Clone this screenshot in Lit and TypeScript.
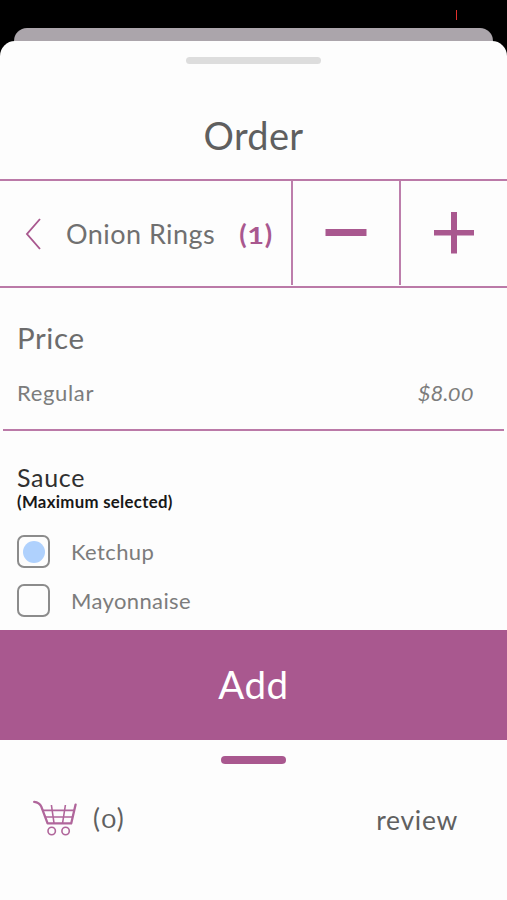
import { LitElement, html, css, svg } from "lit";
import { customElement, property, state } from "lit/decorators.js";

const cartIcon = svg`
  <path d="M1.2 1.8 C5 2.2 7 3.6 8.2 6.4 L14.6 23.4 H38.2 L42.6 4.6" stroke-width="2.3" stroke-linejoin="round" stroke-linecap="round"/>
  <path d="M10 10.4 H41 M12.4 17 H39.6 M18.4 5 L21 23 M32.4 5 L29.6 23" stroke-width="1.6"/>
  <circle cx="18.7" cy="31" r="3.7" stroke-width="1.6"/>
  <circle cx="32.6" cy="31" r="3.7" stroke-width="1.6"/>`;

@customElement("sauce-option")
export class SauceOption extends LitElement {
  @property() label = "";
  @property({ type: Boolean }) checked = false;

  static styles = css`
    :host { display: flex; align-items: center; height: 33px; gap: 21px; }
    .box {
      box-sizing: border-box; width: 33px; height: 33px; border: 2px solid #8c8c8c;
      border-radius: 7px; display: grid; place-items: center;
    }
    .dot { width: 22px; height: 22px; border-radius: 50%; background: #afd1fd; }
    .label { font-size: 22px; line-height: 33px; color: #7c7c7c; letter-spacing: 0.38px; }
  `;

  render() {
    return html`
      <div class="box">${this.checked ? html`<div class="dot"></div>` : null}</div>
      <span class="label">${this.label}</span>`;
  }
}

@customElement("app-root")
export class AppRoot extends LitElement {
  @state() private sauces = [
    { label: "Ketchup", checked: true },
    { label: "Mayonnaise", checked: false },
  ];

  static styles = css`
    :host {
      display: flex; flex-direction: column; width: 507px; height: 900px; overflow: hidden;
      background: #000; font-family: Lato, "Open Sans", sans-serif; color: #5c5c5c;
    }
    .status { height: 28px; display: flex; justify-content: flex-end; align-items: flex-start; }
    .mark { width: 1px; height: 10px; margin: 10px 50px 0 0; background: #e0302c; }
    .behind { height: 30px; margin: 0 14px -17px; border-radius: 13px 13px 0 0; background: #aba5ab; flex: none; }
    .sheet {
      flex: 1; display: flex; flex-direction: column; background: #fdfdfd;
      border-radius: 15px 15px 0 0; z-index: 1;
    }
    .grabber { width: 135px; height: 7px; border-radius: 4px; background: #ddd; margin: 16px auto 0 186px; flex: none; }
    .title {
      margin: 49px 0 0; height: 66px; line-height: 44px; text-align: center; font-weight: 400;
      font-size: 38px; letter-spacing: 0.3px; color: #5f5f5f; flex: none;
    }
    .item {
      display: grid; grid-template-columns: 291px 108px 1fr; height: 105px; flex: none;
      border: solid #bb7aa8; border-width: 2px 0;
    }
    .item > * { display: flex; align-items: center; }
    .cell { justify-content: center; border-left: 2px solid #bd7eac; margin-bottom: 1px; }
    .name { padding-left: 25px; }
    .back { width: 16px; height: 32px; margin-right: 25px; }
    .dish { font-size: 27px; line-height: 40px; letter-spacing: 0.45px; color: #707070; flex: none; }
    .qty { font-size: 27px; font-weight: 700; color: #a9588f; margin-left: 24px; white-space: nowrap; }
    .low { display: inline-block; font-size: 0.77em; transform: scaleX(1.25); margin: 0 0.13em; }
    .qty .low { font-size: 0.86em; margin: 0 0.1em; }
    .price { margin: 0 3px; height: 143px; box-sizing: border-box; padding: 31px 31px 0 14px; border-bottom: 2px solid #bb7aa8; flex: none; }
    .heading { margin: 0; font-size: 29.5px; line-height: 38px; font-weight: 400; color: #6c6c6c; letter-spacing: 0.6px; }
    .line { display: flex; justify-content: space-between; margin-top: 19px; font-size: 22px; line-height: 34px; color: #7c7c7c; }
    .regular { letter-spacing: 0.65px; }
    .amount { font-style: italic; }
    .amount .low { font-size: 0.8em; margin: 0 0.06em; }
    .sauce { padding: 29px 17px 0; height: 170px; flex: none; }
    .sauce-title { margin: 0; font-size: 25px; line-height: 34px; font-weight: 400; color: #303030; letter-spacing: 0.7px; }
    .limit { margin: 0; font-size: 16.8px; line-height: 16px; font-weight: 700; color: #181818; letter-spacing: 0.3px; }
    .options { display: grid; gap: 16px; margin-top: 25px; }
    .add {
      flex: none; height: 110px; border: 0; padding: 0 0 2px; background: #a9588f; color: #fff;
      font: 400 38.5px/44px Lato, sans-serif; letter-spacing: 0.6px;
    }
    .pill { flex: none; width: 65px; height: 8px; border-radius: 4px; background: #a9588f; margin: 16px 0 0 221px; }
    .footer { display: flex; align-items: center; height: 108px; padding: 0 49px 0 33px; }
    .cart { width: 44px; height: 36px; margin-bottom: 1px; }
    .count { font-size: 26px; margin-left: 16px; color: #606060; }
    .review { margin: 4px 0 0 auto; font-size: 26.5px; letter-spacing: 0.7px; color: #606060; }
  `;

  render() {
    return html`
      <div class="status"><div class="mark"></div></div>
      <div class="behind"></div>
      <main class="sheet">
        <div class="grabber"></div>
        <h1 class="title">Order</h1>
        <section class="item">
          <div class="name">
            <svg class="back" viewBox="0 0 16 32" fill="none" stroke="#a9588f" stroke-width="1.9">
              <path d="M15 1 L2 16 L15 31" />
            </svg>
            <span class="dish">Onion Rings</span>
            <span class="qty">(<span class="low">1</span>)</span>
          </div>
          <div class="cell">
            <svg width="42" height="42" viewBox="0 0 42 42" fill="#a9588f"><rect x="0.5" y="17" width="41" height="7" /></svg>
          </div>
          <div class="cell">
            <svg width="42" height="42" viewBox="0 0 42 42" fill="#a9588f">
              <rect x="1" y="18" width="40" height="5.5" /><rect x="18" y="0" width="6" height="41.5" />
            </svg>
          </div>
        </section>
        <section class="price">
          <h2 class="heading">Price</h2>
          <div class="line">
            <span class="regular">Regular</span>
            <span class="amount">$8.<span class="low">0</span><span class="low">0</span></span>
          </div>
        </section>
        <section class="sauce">
          <h2 class="sauce-title">Sauce</h2>
          <p class="limit">(Maximum selected)</p>
          <div class="options">
            ${this.sauces.map((s) => html`<sauce-option .label=${s.label} .checked=${s.checked}></sauce-option>`)}
          </div>
        </section>
        <button class="add">Add</button>
        <div class="pill"></div>
        <footer class="footer">
          <svg class="cart" viewBox="0 0 44 36" fill="none" stroke="#b0669b">${cartIcon}</svg>
          <span class="count">(<span class="low">0</span>)</span>
          <span class="review">review</span>
        </footer>
      </main>`;
  }
}
